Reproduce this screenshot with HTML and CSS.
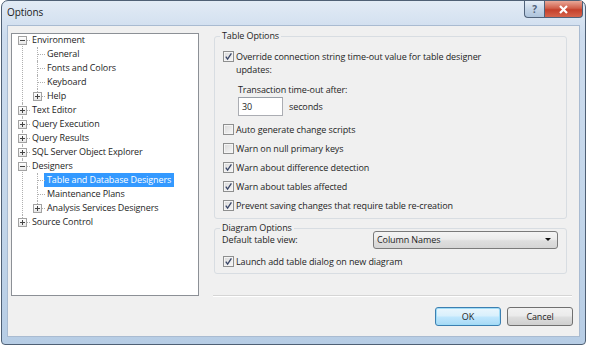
FILE: index.html
```html
<!DOCTYPE html>
<html>
<head lang="en">
    <meta charset="UTF-8">
    <title>Options</title>
    <link rel="stylesheet" href="styles.css">
</head>
<body>
<div class="window">
    <div class="titlebar">
        <div class="caption">Options</div>
        <div class="caption-btns">
            <a class="btn-help">?</a>
            <a class="btn-close">
                <svg width="11" height="9" viewBox="0 0 11 9"><path d="M2 1 L9 8 M9 1 L2 8" stroke="#fff" stroke-width="2.2" fill="none"/></svg>
            </a>
        </div>
    </div>
    <div class="client">
        <!-- 左边的树 -->
        <ul class="tree">
            <li class="first">
                <div class="row"><span class="exp minus"></span><span class="label">Environment</span></div>
                <ul>
                    <li><div class="row"><span class="label">General</span></div></li>
                    <li><div class="row"><span class="label">Fonts and Colors</span></div></li>
                    <li><div class="row"><span class="label">Keyboard</span></div></li>
                    <li class="last"><div class="row"><span class="exp plus"></span><span class="label">Help</span></div></li>
                </ul>
            </li>
            <li><div class="row"><span class="exp plus"></span><span class="label">Text Editor</span></div></li>
            <li><div class="row"><span class="exp plus"></span><span class="label">Query Execution</span></div></li>
            <li><div class="row"><span class="exp plus"></span><span class="label">Query Results</span></div></li>
            <li><div class="row"><span class="exp plus"></span><span class="label">SQL Server Object Explorer</span></div></li>
            <li>
                <div class="row"><span class="exp minus"></span><span class="label">Designers</span></div>
                <ul>
                    <li><div class="row"><span class="label selected">Table and Database Designers</span></div></li>
                    <li><div class="row"><span class="label">Maintenance Plans</span></div></li>
                    <li class="last"><div class="row"><span class="exp plus"></span><span class="label">Analysis Services Designers</span></div></li>
                </ul>
            </li>
            <li class="last"><div class="row"><span class="exp plus"></span><span class="label">Source Control</span></div></li>
        </ul>

        <!-- 右边的选项 -->
        <div class="pane">
            <fieldset class="group group-table">
                <legend>Table Options</legend>
                <div class="opt opt-wrap">
                    <span class="check on"><svg width="9" height="9" viewBox="0 0 9 9"><path d="M1.8 4.6 L3.6 7.2 L7.4 1.4" stroke="#3a4768" stroke-width="1.3" fill="none"/></svg></span>
                    <span class="opt-text">Override connection string time-out value for table designer updates:</span>
                </div>
                <div class="timeout">
                    <div class="timeout-label">Transaction time-out after:</div>
                    <div class="timeout-row">
                        <span class="textbox">30</span>
                        <span class="unit">seconds</span>
                    </div>
                </div>
                <div class="opt first-opt">
                    <span class="check"></span>
                    <span class="opt-text">Auto generate change scripts</span>
                </div>
                <div class="opt">
                    <span class="check"></span>
                    <span class="opt-text">Warn on null primary keys</span>
                </div>
                <div class="opt">
                    <span class="check on"><svg width="9" height="9" viewBox="0 0 9 9"><path d="M1.8 4.6 L3.6 7.2 L7.4 1.4" stroke="#3a4768" stroke-width="1.3" fill="none"/></svg></span>
                    <span class="opt-text">Warn about difference detection</span>
                </div>
                <div class="opt">
                    <span class="check on"><svg width="9" height="9" viewBox="0 0 9 9"><path d="M1.8 4.6 L3.6 7.2 L7.4 1.4" stroke="#3a4768" stroke-width="1.3" fill="none"/></svg></span>
                    <span class="opt-text">Warn about tables affected</span>
                </div>
                <div class="opt">
                    <span class="check on"><svg width="9" height="9" viewBox="0 0 9 9"><path d="M1.8 4.6 L3.6 7.2 L7.4 1.4" stroke="#3a4768" stroke-width="1.3" fill="none"/></svg></span>
                    <span class="opt-text">Prevent saving changes that require table re-creation</span>
                </div>
            </fieldset>

            <fieldset class="group group-diagram">
                <legend>Diagram Options</legend>
                <div class="view-row">
                    <span class="view-label">Default table view:</span>
                    <div class="combo">
                        <span>Column Names</span>
                        <span class="arrow"></span>
                    </div>
                </div>
                <div class="opt launch">
                    <span class="check on"><svg width="9" height="9" viewBox="0 0 9 9"><path d="M1.8 4.6 L3.6 7.2 L7.4 1.4" stroke="#3a4768" stroke-width="1.3" fill="none"/></svg></span>
                    <span class="opt-text">Launch add table dialog on new diagram</span>
                </div>
            </fieldset>

            <div class="sep"></div>
            <div class="buttons">
                <a class="button default">OK</a>
                <a class="button">Cancel</a>
            </div>
        </div>
    </div>
</div>
</body>
</html>
```

FILE: styles.css
```css
* {
    margin: 0;
    padding: 0;
    box-sizing: border-box;
}

body {
    background: #fff;
    font-family: "Open Sans", "Noto Sans", sans-serif;
    font-size: 9px;
    letter-spacing: -0.1px;
    color: #1e1e1e;
}

/* 窗口外框 */
.window {
    width: 585px;
    height: 345px;
    margin-left: 1px;
    border: 1px solid #4f6075;
    border-radius: 7px 7px 4px 4px;
    background: linear-gradient(#e2ebf5, #cddcee 10%, #c3d6ea 60%, #b7cde5);
    display: flex;
    flex-direction: column;
}

.titlebar {
    height: 24px;
    display: flex;
    align-items: flex-start;
    padding-left: 5px;
}

.caption {
    flex: 1;
    line-height: 23px;
    font-size: 10px;
    color: #1b1b1b;
}

.caption-btns {
    display: flex;
    margin-right: 2px;
}

.caption-btns a {
    display: flex;
    align-items: center;
    justify-content: center;
    height: 17px;
    border: 1px solid #50627a;
    border-top: none;
}

.btn-help {
    width: 20px;
    border-right: none !important;
    border-radius: 0 0 0 4px;
    background: linear-gradient(#e6eef7, #c5d5e7 50%, #aec4dc);
    color: #51637b;
    font-weight: bold;
    font-size: 10px;
}

.btn-close {
    width: 39px;
    border-radius: 0 0 4px 0;
    background: linear-gradient(#e9a898, #d1604b 45%, #c4402b 55%, #d6644c);
}

.client {
    flex: 1;
    margin: 0 5px 7px;
    border: 1px solid #a9bbd1;
    background: #f0f0f0;
    display: grid;
    grid-template-columns: 188px 1fr;
    column-gap: 14px;
    padding: 4px 6px 10px 3px;
}

/* 树 */
.tree {
    list-style: none;
    margin-top: 3px;
    height: 263px;
    border: 1px solid #8c9096;
    background: #fff;
}

.tree ul {
    list-style: none;
    padding-left: 15px;
}

.tree li {
    position: relative;
}

.tree > li.first {
    margin-top: -1px;
}

.tree li::before {
    content: "";
    position: absolute;
    left: 10px;
    top: 0;
    bottom: 0;
    border-left: 1px dotted #b0b0b0;
}

.tree li.first::before {
    top: 7px;
}

.tree li.last::before {
    bottom: auto;
    height: 7px;
}

.row {
    position: relative;
    height: 14px;
    line-height: 14px;
    padding-left: 20px;
    display: flex;
    white-space: nowrap;
}

.row::before {
    content: "";
    position: absolute;
    left: 11px;
    top: 7px;
    width: 7px;
    border-top: 1px dotted #b0b0b0;
}

.label {
    padding: 0 3px;
    margin-left: -3px;
}

.label.selected {
    background: #3399ff;
    color: #fff;
}

.exp {
    position: absolute;
    left: 6px;
    top: 3px;
    width: 9px;
    height: 9px;
    border: 1px solid #a2a2a2;
    background: linear-gradient(#fff, #e6e6e6);
    z-index: 1;
}

.exp::after {
    content: "";
    position: absolute;
    left: 1px;
    top: 3px;
    width: 5px;
    height: 1px;
    background: #444;
}

.exp.plus::before {
    content: "";
    position: absolute;
    left: 3px;
    top: 1px;
    width: 1px;
    height: 5px;
    background: #444;
}

/* 右边 */
.pane {
    display: flex;
    flex-direction: column;
}

.group {
    margin-left: 1px;
    width: 353px;
    border: 1px solid #d8dde2;
    border-radius: 3px;
    padding: 0 8px;
}

.group legend {
    line-height: 12px;
    padding: 0 2px;
    margin-left: -3px;
}

.group-table {
    padding-bottom: 3px;
}

.opt {
    display: flex;
    align-items: center;
    height: 19px;
}

.opt-wrap {
    align-items: flex-start;
    height: auto;
    margin-top: 8px;
    line-height: 13px;
}

.opt-wrap .opt-text {
    max-width: 270px;
}

.opt-wrap .check {
    margin-top: 1px;
}

.check {
    flex: none;
    width: 11px;
    height: 11px;
    border: 1px solid #8e8f8f;
    background: linear-gradient(135deg, #d9d9d9, #f7f7f7);
    box-shadow: inset 0 0 0 1px #f4f4f4;
    margin-right: 2px;
    display: flex;
    align-items: center;
    justify-content: center;
}

.timeout {
    margin-top: 7px;
    padding-left: 15px;
}

.timeout-label {
    line-height: 13px;
}

.timeout-row {
    margin-top: 1px;
    display: flex;
    align-items: center;
    height: 19px;
}

.textbox {
    width: 45px;
    height: 19px;
    line-height: 17px;
    border: 1px solid #abadb3;
    border-top-color: #9aa0a8;
    background: #fff;
    padding-left: 3px;
}

.unit {
    margin-left: 6px;
}

.first-opt {
    margin-top: 4px;
}

.group-diagram {
    margin-top: 3px;
    padding-bottom: 2px;
}

.view-row {
    display: flex;
    align-items: center;
    height: 19px;
    margin-top: -4px;
}

.view-label {
    flex: 1;
    margin-left: -1px;
}

.combo {
    width: 185px;
    height: 18px;
    border: 1px solid #7a7a7a;
    border-radius: 3px;
    background: linear-gradient(#f4f4f4, #ececec 45%, #dedede 55%, #d5d5d5);
    display: flex;
    align-items: center;
    padding: 0 6px 0 3px;
}

.combo span:first-child {
    flex: 1;
}

.arrow {
    width: 0;
    height: 0;
    border-left: 3px solid transparent;
    border-right: 3px solid transparent;
    border-top: 3px solid #111;
}

.launch {
    margin-top: 3px;
}

.sep {
    margin-top: auto;
    margin-right: 1px;
    border-top: 1px solid #d5d5d5;
    border-bottom: 1px solid #fff;
    margin-bottom: 10px;
}

.buttons {
    display: flex;
    justify-content: flex-end;
    gap: 6px;
}

.button {
    width: 66px;
    height: 19px;
    line-height: 17px;
    text-align: center;
    border: 1px solid #707070;
    border-radius: 3px;
    background: linear-gradient(#f2f2f2, #ebebeb 45%, #dddddd 55%, #cfcfcf);
}

.button.default {
    border-color: #3c7fb1;
    background: linear-gradient(#eaf6fd, #d9f0fc 45%, #bee6fd 55%, #a7d9f5);
    box-shadow: inset 0 0 0 1px #9fdcf7;
}
```
